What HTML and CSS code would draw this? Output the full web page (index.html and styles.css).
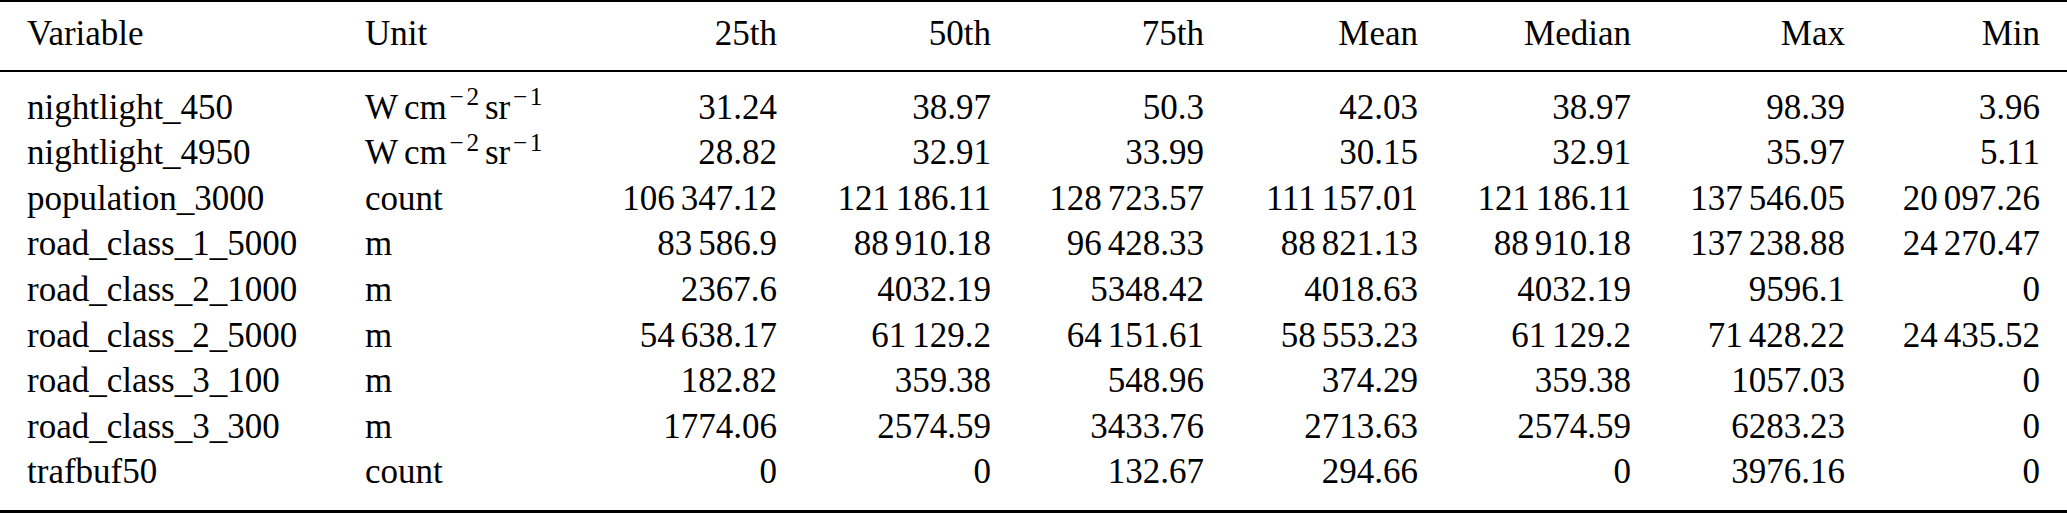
FILE: index.html
```html
<!DOCTYPE html>
<html lang="en">
<head>
<meta charset="utf-8">
<title>Variable statistics</title>
<link rel="stylesheet" href="styles.css">
</head>
<body class="page">
<div class="tbl">
  <div class="row head">
    <div class="cell txt">Variable</div>
    <div class="cell txt">Unit</div>
    <div class="cell">25th</div>
    <div class="cell">50th</div>
    <div class="cell">75th</div>
    <div class="cell">Mean</div>
    <div class="cell">Median</div>
    <div class="cell">Max</div>
    <div class="cell">Min</div>
  </div>
  <div class="body">
    <div class="row">
      <div class="cell txt">nightlight_450</div>
      <div class="cell txt">W<span class="thin"></span>cm<span class="sup"><span class="minus">−</span>2</span><span class="thin"></span>sr<span class="sup"><span class="minus">−</span>1</span></div>
      <div class="cell">31.24</div><div class="cell">38.97</div><div class="cell">50.3</div><div class="cell">42.03</div><div class="cell">38.97</div><div class="cell">98.39</div><div class="cell">3.96</div>
    </div>
    <div class="row">
      <div class="cell txt">nightlight_4950</div>
      <div class="cell txt">W<span class="thin"></span>cm<span class="sup"><span class="minus">−</span>2</span><span class="thin"></span>sr<span class="sup"><span class="minus">−</span>1</span></div>
      <div class="cell">28.82</div><div class="cell">32.91</div><div class="cell">33.99</div><div class="cell">30.15</div><div class="cell">32.91</div><div class="cell">35.97</div><div class="cell">5.11</div>
    </div>
    <div class="row">
      <div class="cell txt">population_3000</div><div class="cell txt">count</div>
      <div class="cell">106<span class="thin"></span>347.12</div><div class="cell">121<span class="thin"></span>186.11</div><div class="cell">128<span class="thin"></span>723.57</div><div class="cell">111<span class="thin"></span>157.01</div><div class="cell">121<span class="thin"></span>186.11</div><div class="cell">137<span class="thin"></span>546.05</div><div class="cell">20<span class="thin"></span>097.26</div>
    </div>
    <div class="row">
      <div class="cell txt">road_class_1_5000</div><div class="cell txt">m</div>
      <div class="cell">83<span class="thin"></span>586.9</div><div class="cell">88<span class="thin"></span>910.18</div><div class="cell">96<span class="thin"></span>428.33</div><div class="cell">88<span class="thin"></span>821.13</div><div class="cell">88<span class="thin"></span>910.18</div><div class="cell">137<span class="thin"></span>238.88</div><div class="cell">24<span class="thin"></span>270.47</div>
    </div>
    <div class="row">
      <div class="cell txt">road_class_2_1000</div><div class="cell txt">m</div>
      <div class="cell">2367.6</div><div class="cell">4032.19</div><div class="cell">5348.42</div><div class="cell">4018.63</div><div class="cell">4032.19</div><div class="cell">9596.1</div><div class="cell">0</div>
    </div>
    <div class="row">
      <div class="cell txt">road_class_2_5000</div><div class="cell txt">m</div>
      <div class="cell">54<span class="thin"></span>638.17</div><div class="cell">61<span class="thin"></span>129.2</div><div class="cell">64<span class="thin"></span>151.61</div><div class="cell">58<span class="thin"></span>553.23</div><div class="cell">61<span class="thin"></span>129.2</div><div class="cell">71<span class="thin"></span>428.22</div><div class="cell">24<span class="thin"></span>435.52</div>
    </div>
    <div class="row">
      <div class="cell txt">road_class_3_100</div><div class="cell txt">m</div>
      <div class="cell">182.82</div><div class="cell">359.38</div><div class="cell">548.96</div><div class="cell">374.29</div><div class="cell">359.38</div><div class="cell">1057.03</div><div class="cell">0</div>
    </div>
    <div class="row">
      <div class="cell txt">road_class_3_300</div><div class="cell txt">m</div>
      <div class="cell">1774.06</div><div class="cell">2574.59</div><div class="cell">3433.76</div><div class="cell">2713.63</div><div class="cell">2574.59</div><div class="cell">6283.23</div><div class="cell">0</div>
    </div>
    <div class="row">
      <div class="cell txt">trafbuf50</div><div class="cell txt">count</div>
      <div class="cell">0</div><div class="cell">0</div><div class="cell">132.67</div><div class="cell">294.66</div><div class="cell">0</div><div class="cell">3976.16</div><div class="cell">0</div>
    </div>
  </div>
</div>
</body>
</html>
```

FILE: styles.css
```css
html, body {
  margin: 0;
  padding: 0;
  background: #ffffff;
}

.page {
  font-family: "Liberation Serif", Tinos, "Times New Roman", Times, serif !important;
  color: #000;
}

.tbl {
  width: 2067px;
  border-top: 2px solid #000;
  border-bottom: 3px solid #000;
  font-family: "Liberation Serif", Tinos, "Times New Roman", Times, serif !important;
  font-size: 35px;
  line-height: 45.6px;
}

.row {
  display: grid;
  grid-template-columns: 338px 253px 213px 214px 213px 214px 213px 214px 195px;
}

.cell {
  padding: 0 27px;
  text-align: right;
  white-space: nowrap;
  font-family: "Liberation Serif", Tinos, "Times New Roman", Times, serif !important;
}

.cell.txt {
  text-align: left;
}

.head {
  padding: 9px 0 13px;
  border-bottom: 2px solid #000;
}

.body {
  padding: 13px 0 15px;
}

.thin {
  display: inline-block;
  width: 0.17em;
}

.sup {
  font-size: 0.72em;
  line-height: 0;
  vertical-align: 0.53em;
}

.minus {
  display: inline-block;
  width: 0.78em;
  text-align: center;
}
```
